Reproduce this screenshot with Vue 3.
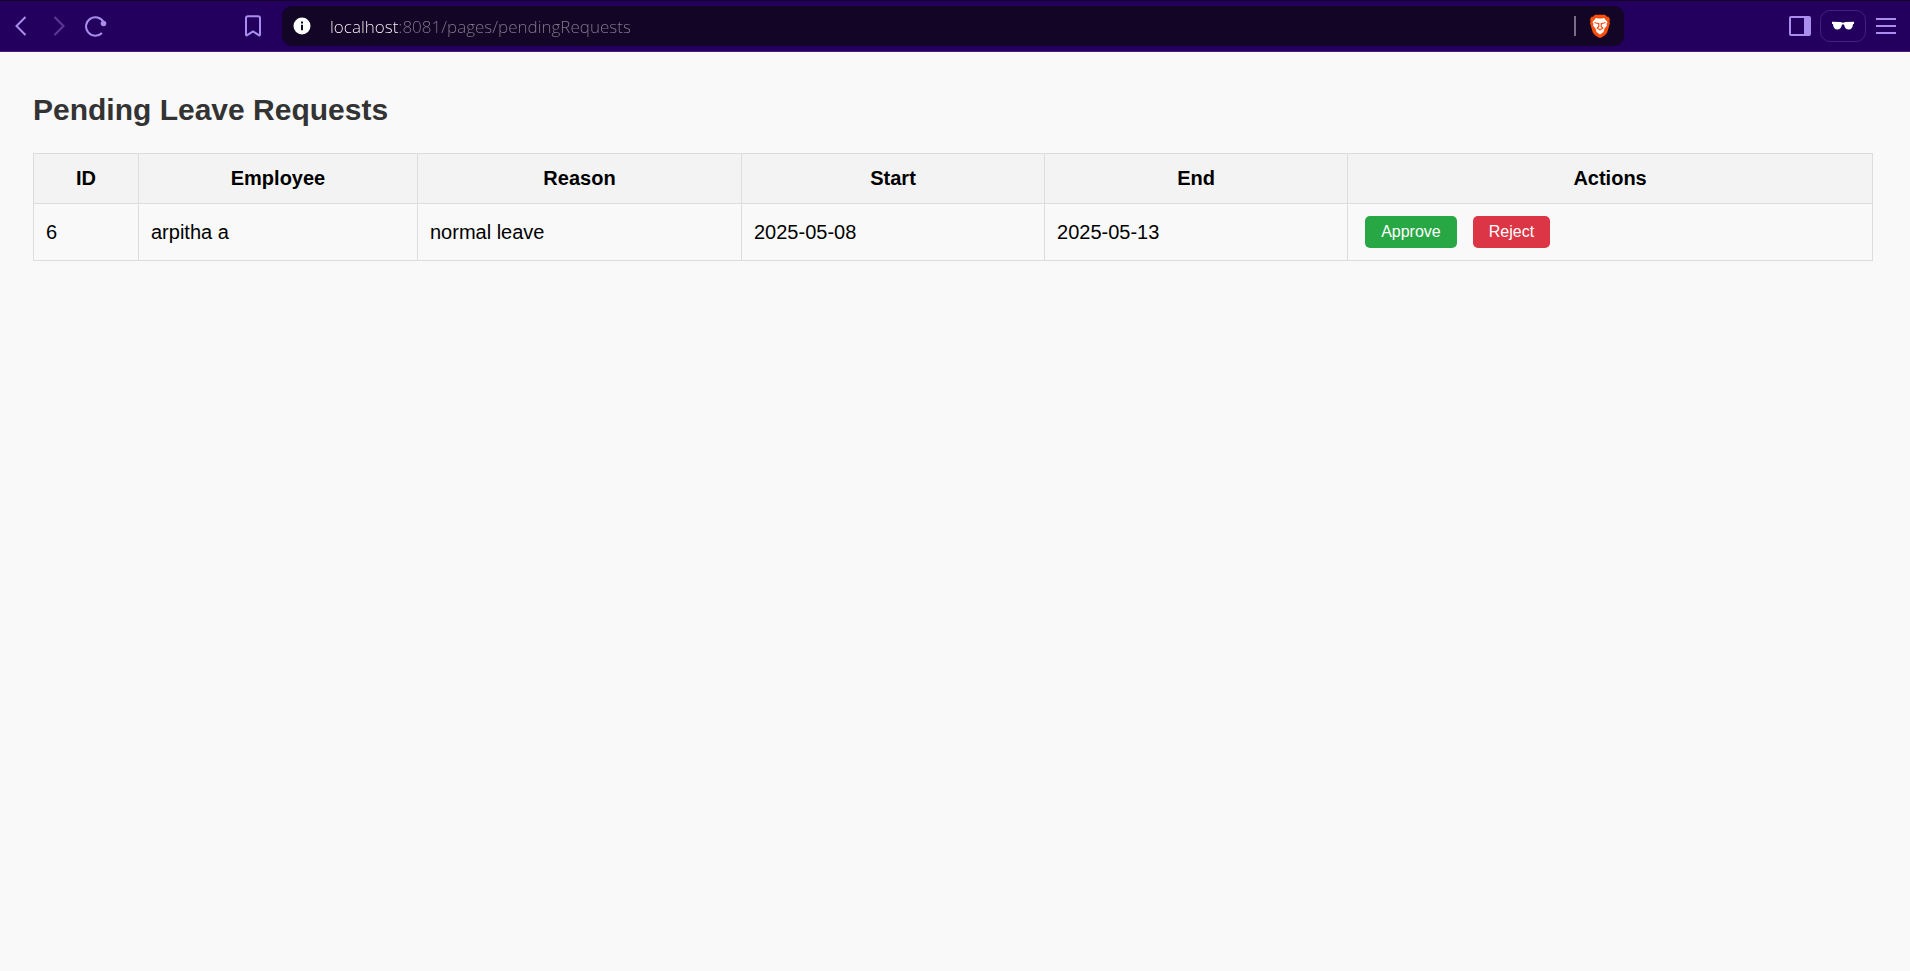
<script setup>
import { ref } from 'vue'

const url = ref('localhost:8081/pages/pendingRequests')
const columns = [
  { key: 'id', label: 'ID' },
  { key: 'employee', label: 'Employee' },
  { key: 'reason', label: 'Reason' },
  { key: 'start', label: 'Start' },
  { key: 'end', label: 'End' },
  { key: 'actions', label: 'Actions' },
]
const requests = ref([
  { id: 6, employee: 'arpitha a', reason: 'normal leave', start: '2025-05-08', end: '2025-05-13' },
])
</script>

<template>
  <div class="browser">
    <header class="toolbar">
      <nav class="nav">
        <button class="tool" type="button" aria-label="Back">
          <svg width="12" height="22" viewBox="0 0 12 22"><path d="M10.5 2 1.5 11l9 9" /></svg>
        </button>
        <button class="tool dim" type="button" aria-label="Forward">
          <svg width="12" height="22" viewBox="0 0 12 22"><path d="m1.5 2 9 9-9 9" /></svg>
        </button>
        <button class="tool reload" type="button" aria-label="Reload">
          <svg width="22" height="22" viewBox="0 0 22 22">
            <path d="M18.5 7A9.3 9.3 0 1 0 17 18" />
            <circle class="solid" cx="18.5" cy="8.5" r="2.8" />
          </svg>
        </button>
        <button class="tool bookmark" type="button" aria-label="Bookmark">
          <svg width="16" height="22" viewBox="0 0 16 22">
            <path d="M3 1.2h10Q15 1.2 15 3.2V19.5Q15 21 13.8 20.2L8 16.4 2.2 20.2Q1 21 1 19.5V3.2Q1 1.2 3 1.2z" />
          </svg>
        </button>
      </nav>

      <div class="address">
        <button class="tool" type="button" aria-label="Site information">
          <svg width="18" height="18" viewBox="0 0 18 18">
            <circle cx="9" cy="9" r="8.5" fill="#fff" stroke="none" />
            <path d="M9 7.8v5.4M9 4.5v2" stroke="#130525" stroke-width="2" />
          </svg>
        </button>
        <input v-model="url" class="url" type="text" aria-label="Address" spellcheck="false" />
        <span class="divider"></span>
        <button class="tool" type="button" aria-label="Shields">
          <svg width="20" height="24" viewBox="0 0 20 24">
            <path d="M5 .8h10l2 2 1.6-.1L20 5.5l-.7 2L20 9l-2.8 9.5-2 2.5-4.2 2.7H9L4.8 21l-2-2.5L0 9l.7-1.5-.7-2 1.4-2.8L3 2.8z" fill="#fb4f0b" stroke="none" />
            <path d="m6 4 2 .5h4l2-.5 3.5 4-1 2 .5 1.500-2.500 3-1 3.500-3.500 2.500-3.500-2.500-1-3.500-2.500-3 .5-1.500-1-2z" fill="#fff" stroke="none" />
            <path d="m4.500 8.500 4 1.300M15.500 8.500l-4 1.300M8.800 9v3.500l-1.600 1.700 2.800 1.500 2.800-1.500-1.600-1.700V9" stroke="#fb4f0b" stroke-width="1.200" />
          </svg>
        </button>
      </div>

      <div class="tools">
        <button class="tool" type="button" aria-label="Sidebar">
          <svg width="22" height="20" viewBox="0 0 22 20">
            <rect x="1" y="1" width="20" height="18" rx="1" />
            <path class="solid" d="M15 1h6v18h-6z" />
          </svg>
        </button>
        <button class="tool private" type="button" aria-label="Private window">
          <svg width="24" height="10" viewBox="0 0 24 10">
            <path d="M1 .8 9.500 1 12 1.800 14.500 1 23 .8v2l-1 .5C21.700 7 20 8.500 17.800 8.500 15 8.500 13.500 6.500 13 3.500h-2C10.500 6.500 9 8.500 6.200 8.500 4 8.500 2.300 7 2 3.300L1 2.800z" fill="#fff" stroke="none" />
          </svg>
        </button>
        <button class="tool" type="button" aria-label="Menu">
          <svg width="22" height="18" viewBox="0 0 22 18"><path d="M1 2h20M1 9h20M1 16h20" /></svg>
        </button>
      </div>
    </header>

    <main class="page">
      <h1>Pending Leave Requests</h1>
      <table>
        <colgroup>
          <col v-for="c in columns" :key="c.key" :class="'col-' + c.key" />
        </colgroup>
        <thead>
          <tr>
            <th v-for="c in columns" :key="c.key" scope="col">{{ c.label }}</th>
          </tr>
        </thead>
        <tbody>
          <tr v-for="r in requests" :key="r.id">
            <td>{{ r.id }}</td>
            <td>{{ r.employee }}</td>
            <td>{{ r.reason }}</td>
            <td>{{ r.start }}</td>
            <td>{{ r.end }}</td>
            <td>
              <div class="actions">
                <button class="action approve" type="button">Approve</button>
                <button class="action reject" type="button">Reject</button>
              </div>
            </td>
          </tr>
        </tbody>
      </table>
    </main>
  </div>
</template>

<style>
body {
  background: #f9f9f9;
}
</style>

<style scoped>
.browser {
  font-family: "Liberation Sans", Arial, sans-serif;
  color: #000;
}

.toolbar {
  display: flex;
  align-items: center;
  box-sizing: border-box;
  height: 52px;
  background: #23005e;
  border-top: 1px solid #130525;
  border-bottom: 1px solid #43217c;
}

.tool {
  display: flex;
  flex: none;
  align-items: center;
  justify-content: center;
  padding: 0;
  border: 0;
  background: none;
  color: #a98eef;
}

.tool svg {
  display: block;
  fill: none;
  stroke: currentColor;
  stroke-width: 2;
}

.tool .solid {
  fill: currentColor;
  stroke: none;
}

.tool.dim {
  color: #5d389a;
}

.nav {
  display: flex;
  align-items: center;
  justify-content: space-between;
  box-sizing: border-box;
  width: 282px;
  padding: 0 21px 0 15px;
}

.nav .dim {
  margin-left: 26px;
}

.nav .reload {
  margin-left: 20px;
}

.nav .bookmark {
  margin-left: auto;
}

.address {
  display: flex;
  flex: 1;
  align-items: center;
  min-width: 0;
  height: 40px;
  padding: 0 14px 0 11px;
  border-radius: 10px;
  background: #130525;
}

.url {
  flex: 1;
  min-width: 0;
  height: 32px;
  margin-left: 19px;
  padding: 0;
  border: 0;
  outline: 0;
  font: 300 17px "Open Sans", "Noto Sans", sans-serif;
  color: #fff;
  background: linear-gradient(90deg, #fff 68px, #82798e 68px) text;
  -webkit-text-fill-color: transparent;
}

.divider {
  width: 2px;
  height: 20px;
  margin-right: 14px;
  background: #776e85;
}

.tools {
  display: flex;
  align-items: center;
  justify-content: flex-end;
  box-sizing: border-box;
  width: 286px;
  padding-right: 13px;
  gap: 9px;
}

.private {
  box-sizing: border-box;
  width: 46px;
  height: 32px;
  border: 1px solid #43217c;
  border-radius: 10px;
}

.page {
  padding: 41px 37px 41px 33px;
}

h1 {
  margin: 0 0 26px;
  font-size: 30px;
  line-height: 34px;
  color: #333;
}

table {
  width: 100%;
  table-layout: fixed;
  border-collapse: collapse;
  font-size: 20px;
  line-height: 25px;
}

.col-id { width: 5.71%; }
.col-employee { width: 15.17%; }
.col-reason { width: 17.62%; }
.col-start,
.col-end { width: 16.48%; }
.col-actions { width: 28.54%; }

th,
td {
  padding: 12px;
  border: 1px solid #ddd;
}

th {
  background: #f3f3f3;
}

.actions {
  display: flex;
  gap: 16px;
  padding-left: 5px;
}

.action {
  height: 32px;
  padding: 0 16px;
  border: 0;
  border-radius: 5px;
  font: 16px "Liberation Sans", Arial, sans-serif;
  color: #fff;
  cursor: pointer;
}

.approve {
  background: #28a745;
}

.reject {
  background: #dc3545;
}
</style>
